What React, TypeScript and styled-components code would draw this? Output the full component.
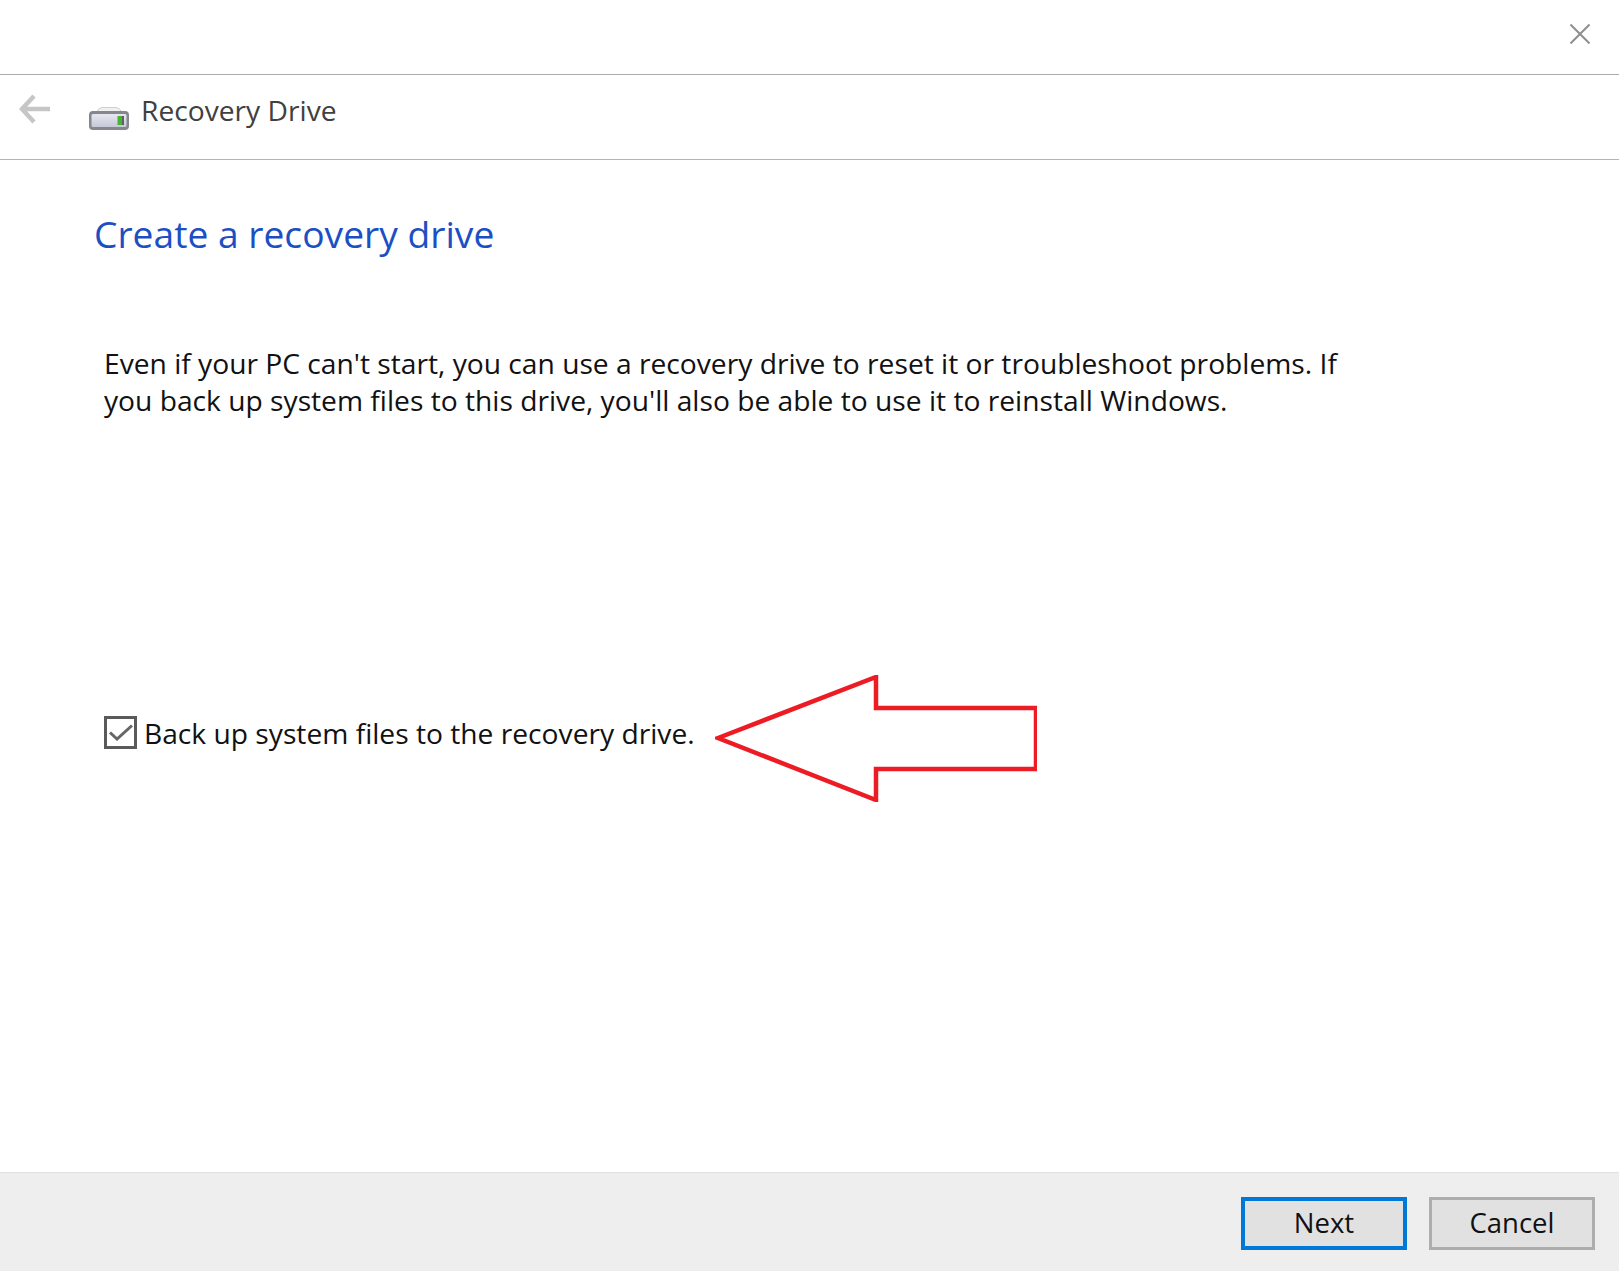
import React from 'react';
import styled, {createGlobalStyle} from 'styled-components';

const GlobalStyle = createGlobalStyle`
	html, body {
		margin: 0;
		padding: 0;
		background: #ffffff;
	}
	body {
		font-family: 'Open Sans', 'Noto Sans', 'Liberation Sans', sans-serif;
		color: #111111;
	}
`;

const App = () => {
	return (
		<>
			<GlobalStyle />
			<Window>
				<TitleBar>
					<CloseIcon width='20' height='20' viewBox='0 0 20 20'>
						<path d='M0.5 0.5 L19.5 19.5 M19.5 0.5 L0.5 19.5' />
					</CloseIcon>
				</TitleBar>
				<NavBar>
					<BackIcon width='32' height='30' viewBox='0 0 32 30'>
						<path d='M31 15 H3 M15 2 L3 15 L15 28' />
					</BackIcon>
					<DriveIcon width='42' height='26' viewBox='0 0 42 26'>
						<defs>
							<linearGradient id='driveBody' x1='0' y1='0' x2='0' y2='1'>
								<stop offset='0' stopColor='#e6e7f0' />
								<stop offset='1' stopColor='#c6c8d6' />
							</linearGradient>
						</defs>
						<path d='M8 8 Q10 2.5 14 2.5 H28 Q32 2.5 34 8 Z' fill='#f0f0f2' stroke='#cfcfcf' />
						<rect x='1' y='6' width='40' height='19' rx='4' fill='#85878c' />
						<rect x='3.5' y='9' width='35' height='13' rx='1.5' fill='url(#driveBody)' />
						<rect x='29.5' y='11' width='4.5' height='9' fill='#45b52f' />
						<rect x='34' y='11' width='2' height='9' fill='#5f6164' />
					</DriveIcon>
					<NavTitle>Recovery Drive</NavTitle>
				</NavBar>
				<Content>
					<Heading>Create a recovery drive</Heading>
					<Description>
						Even if your PC can&apos;t start, you can use a recovery drive to reset it or troubleshoot problems. If
						<br />
						you back up system files to this drive, you&apos;ll also be able to use it to reinstall Windows.
					</Description>
					<CheckRow>
						<CheckBox>
							<svg width='24' height='17' viewBox='0 0 24 17'>
								<path d='M1 8.5 L8 15 L23 1.5' fill='none' stroke='#666666' strokeWidth='3' />
							</svg>
						</CheckBox>
						<CheckLabel>Back up system files to the recovery drive.</CheckLabel>
						<Callout width='322' height='127' viewBox='0 0 322 127'>
							<path d='M3 63 L161 2 V33 H321 V94 H161 V125 Z' />
						</Callout>
					</CheckRow>
				</Content>
				<Footer>
					<FooterButton $primary>Next</FooterButton>
					<FooterButton>Cancel</FooterButton>
				</Footer>
			</Window>
		</>
	);
};

export default App;

const Window = styled.div`
	display: flex;
	flex-direction: column;
	width: 1619px;
	height: 1271px;
	overflow: hidden;
	background: #ffffff;
`;

const TitleBar = styled.div`
	display: flex;
	justify-content: flex-end;
	align-items: flex-start;
	box-sizing: border-box;
	height: 75px;
	padding: 24px 29px 0 0;
	border-bottom: 1px solid #ababab;
`;

const CloseIcon = styled.svg`
	fill: none;
	stroke: #8f8f8f;
	stroke-width: 2;
`;

const NavBar = styled.div`
	display: flex;
	align-items: flex-start;
	box-sizing: border-box;
	height: 85px;
	padding-left: 19px;
	border-bottom: 1px solid #b4b4b4;
`;

const BackIcon = styled.svg`
	margin-top: 19px;
	fill: none;
	stroke: #c6c6c6;
	stroke-width: 4.5;
`;

const DriveIcon = styled.svg`
	margin: 30px 0 0 37px;
`;

const NavTitle = styled.span`
	margin: 17px 0 0 11px;
	font-size: 28.2px;
	line-height: 36px;
	color: #404040;
`;

const Content = styled.main`
	display: flex;
	flex: 1;
	flex-direction: column;
	align-items: flex-start;
	padding-left: 94px;
`;

const Heading = styled.h1`
	margin: 50px 0 0;
	font-size: 37.2px;
	font-weight: 400;
	line-height: 48px;
	color: #1c4fc4;
`;

const Description = styled.p`
	margin: 87px 0 0 10px;
	font-size: 28.2px;
	line-height: 37px;
	white-space: nowrap;
	color: #111111;
`;

const CheckRow = styled.div`
	display: flex;
	align-items: center;
	margin: 244px 0 0 10px;
`;

const CheckBox = styled.span`
	display: flex;
	align-items: center;
	justify-content: center;
	box-sizing: border-box;
	width: 33px;
	height: 33px;
	border: 3px solid #5a5a5a;
	background: #ffffff;
`;

const CheckLabel = styled.span`
	margin-left: 7px;
	font-size: 28.2px;
	line-height: 36px;
	color: #111111;
`;

const Callout = styled.svg`
	margin: 12px 0 0 20px;
	fill: none;
	stroke: #ed1c24;
	stroke-width: 4.5;
`;

const Footer = styled.footer`
	display: flex;
	justify-content: flex-end;
	align-items: flex-start;
	gap: 22px;
	box-sizing: border-box;
	height: 99px;
	padding: 24px 24px 0 0;
	background: #eeeeee;
	border-top: 1px solid #e0e0e0;
`;

const FooterButton = styled.button<{$primary?: boolean}>`
	box-sizing: border-box;
	width: 166px;
	height: 53px;
	padding: 0 0 3px;
	border: ${(p) => (p.$primary ? '4px solid #0078d7' : '3px solid #adadad')};
	background: #e1e1e1;
	font-family: inherit;
	font-size: 27.5px;
	color: #111111;
`;
